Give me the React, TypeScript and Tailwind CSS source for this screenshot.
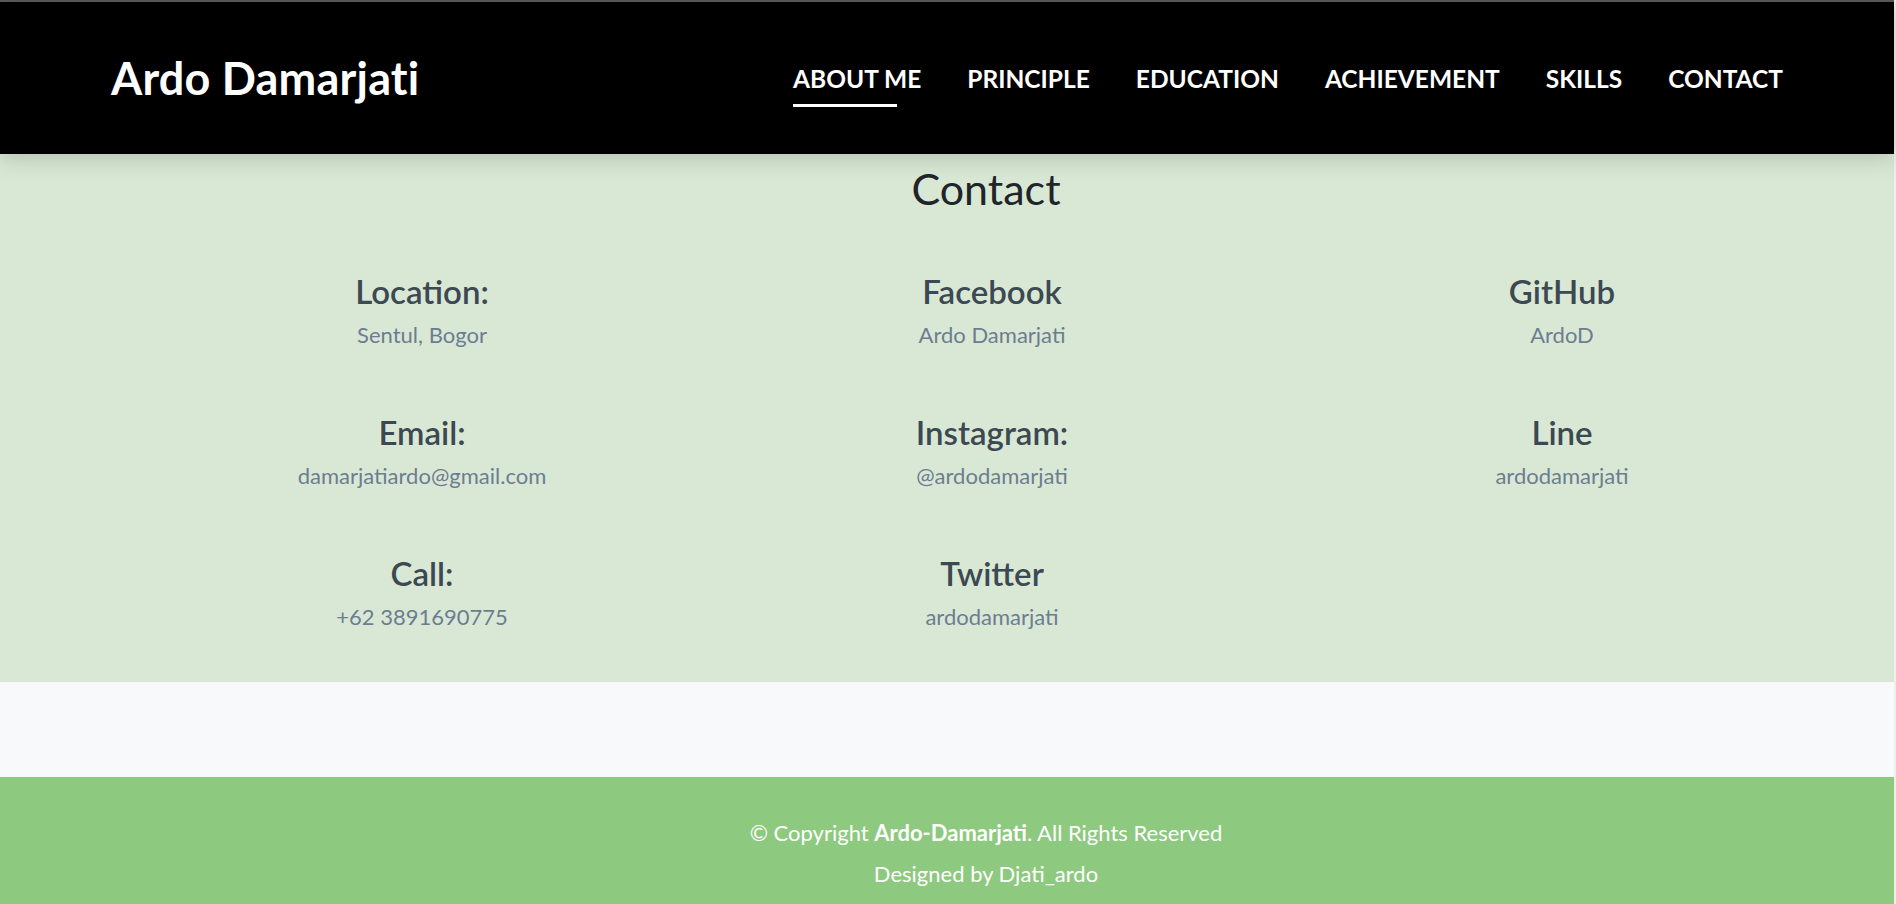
import React from "react";

const navItems = ["ABOUT ME", "PRINCIPLE", "EDUCATION", "ACHIEVEMENT", "SKILLS", "CONTACT"];

const contacts: { label: string; value: string }[] = [
  { label: "Location:", value: "Sentul, Bogor" },
  { label: "Facebook", value: "Ardo Damarjati" },
  { label: "GitHub", value: "ArdoD" },
  { label: "Email:", value: "damarjatiardo@gmail.com" },
  { label: "Instagram:", value: "@ardodamarjati" },
  { label: "Line", value: "ardodamarjati" },
  { label: "Call:", value: "+62 3891690775" },
  { label: "Twitter", value: "ardodamarjati" },
];

function Header() {
  return (
    <header className="relative z-10 h-[152px] pt-[2px] bg-black flex items-center justify-between px-[111px] shadow-[0_4px_22px_rgba(0,0,0,0.18)]">
      <a className="text-white text-[45px] leading-[52px] font-bold pb-[2px] tracking-[0.2px]">Ardo Damarjati</a>
      <nav className="flex items-center gap-[46px]">
        {navItems.map((item, idx) => (
          <a key={item} className="relative text-white text-[24.5px] leading-[32px] font-bold">
            {item}
            {idx === 0 && <span className="absolute left-0 top-[41px] h-[3px] w-[104px] bg-white" />}
          </a>
        ))}
      </nav>
    </header>
  );
}

function ContactItem({ label, value }: { label: string; value: string }) {
  return (
    <div className="flex flex-col items-center text-center">
      <h3 className="text-[33px] leading-[40px] font-semibold text-[#3c4852]">{label}</h3>
      <p className="mt-[10px] text-[22px] leading-[28px] text-[#6c7d91]">{value}</p>
    </div>
  );
}

export default function App() {
  return (
    <div className="min-h-[904px] bg-[#f8f9fb] border-r-2 border-[#eeeeee] font-['Lato','Open_Sans',sans-serif]">
      <div className="h-[2px] bg-[#5c5c5c]" />
      <Header />

      <section className="bg-[#d9e8d5] pt-[15px] pb-[51px]">
        <div className="ml-[137px] w-[1710px]">
          <h2 className="text-center pr-[12px] text-[43px] leading-[40px] text-[#212529] mb-[62px]">Contact</h2>
          <div className="grid grid-cols-3 gap-y-[63px]">
            {contacts.map((c) => (
              <ContactItem key={c.label} label={c.label} value={c.value} />
            ))}
          </div>
        </div>
      </section>

      <div className="h-[95px] bg-[#f8f9fb]" />

      <footer className="h-[127px] bg-[#8dc97f] pt-[42px] text-white text-[22px] leading-[28px]">
        <div className="ml-[137px] w-[1710px] pr-[12px] text-center">
          <p>
            © Copyright <span className="font-bold">Ardo-Damarjati</span>. All Rights Reserved
          </p>
          <p className="mt-[13px]">Designed by Djati_ardo</p>
        </div>
      </footer>
    </div>
  );
}
